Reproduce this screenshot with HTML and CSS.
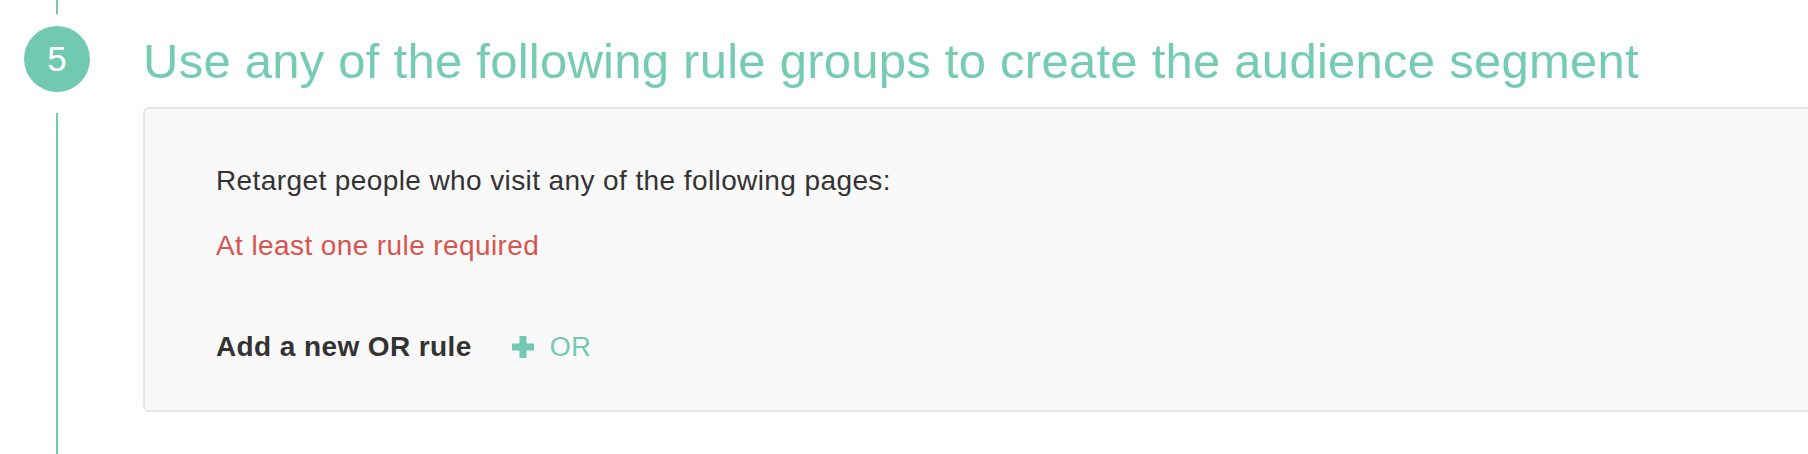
FILE: index.html
```html
<!DOCTYPE html>
<html lang="en">
<head>
    <meta charset="UTF-8" />
    <title>Audience segment</title>
    <link rel="stylesheet" href="styles.css">
</head>
<body>
    <div class="step">
        <div class="rail">
            <div class="rail-line top"></div>
            <div class="step-num">5</div>
            <div class="rail-line bottom"></div>
        </div>
        <div class="step-body">
            <h2 class="step-title">Use any of the following rule groups to create the audience segment</h2>
            <div class="rule-box">
                <p class="rule-intro">Retarget people who visit any of the following pages:</p>
                <p class="rule-error">At least one rule required</p>
                <div class="rule-add">
                    <span class="rule-add-label">Add a new OR rule</span>
                    <button class="or-btn" type="button">
                        <svg class="plus" width="22" height="22" viewBox="0 0 22 22">
                            <path d="M11 0 V22 M0 11 H22" stroke="currentColor" stroke-width="7" fill="none"/>
                        </svg>
                        <span>OR</span>
                    </button>
                </div>
            </div>
        </div>
    </div>
</body>
</html>
```

FILE: styles.css
```css
* {
    margin: 0;
    padding: 0;
    box-sizing: border-box;
}
body {
    background: #fff;
    font-family: "Liberation Sans", Arial, sans-serif;
    color: #333;
    overflow: hidden;
}
.step {
    display: flex;
    min-height: 100vh;
}

/* left timeline */
.rail {
    width: 114px;
    flex-shrink: 0;
    display: flex;
    flex-direction: column;
    align-items: center;
}
.rail-line {
    width: 2px;
    background: #72c9b2;
}
.rail-line.top {
    height: 14px;
    margin-bottom: 12px;
}
.rail-line.bottom {
    flex: 1;
    margin-top: 21px;
}
.step-num {
    width: 66px;
    height: 66px;
    border-radius: 50%;
    background: #72c9b2;
    color: #fff;
    font-size: 35px;
    display: flex;
    justify-content: center;
    align-items: center;
}

.step-body {
    flex: 1;
    margin-left: 29px;
    padding-bottom: 41px;
}
.step-title {
    font-size: 49px;
    font-weight: normal;
    letter-spacing: 0.25px;
    line-height: 52px;
    color: #75cbb4;
    margin: 35px 0 20px;
    white-space: nowrap;
}

.rule-box {
    width: 1720px;
    background: #f9f9f9;
    border: 2px solid #e6e6e6;
    border-radius: 6px;
    padding: 54px 0 45px 71px;
    font-size: 28px;
    letter-spacing: 0.4px;
    line-height: 36px;
}
.rule-error {
    color: #d9534f;
    margin-top: 29px;
}
.rule-add {
    display: flex;
    align-items: center;
    margin-top: 65px;
}
.rule-add-label {
    font-weight: bold;
}
.or-btn {
    display: flex;
    align-items: center;
    gap: 16px;
    margin-left: 40px;
    background: none;
    border: none;
    color: #72c9b2;
    font-family: inherit;
    font-size: 27px;
    letter-spacing: 0.4px;
    cursor: pointer;
}
```
